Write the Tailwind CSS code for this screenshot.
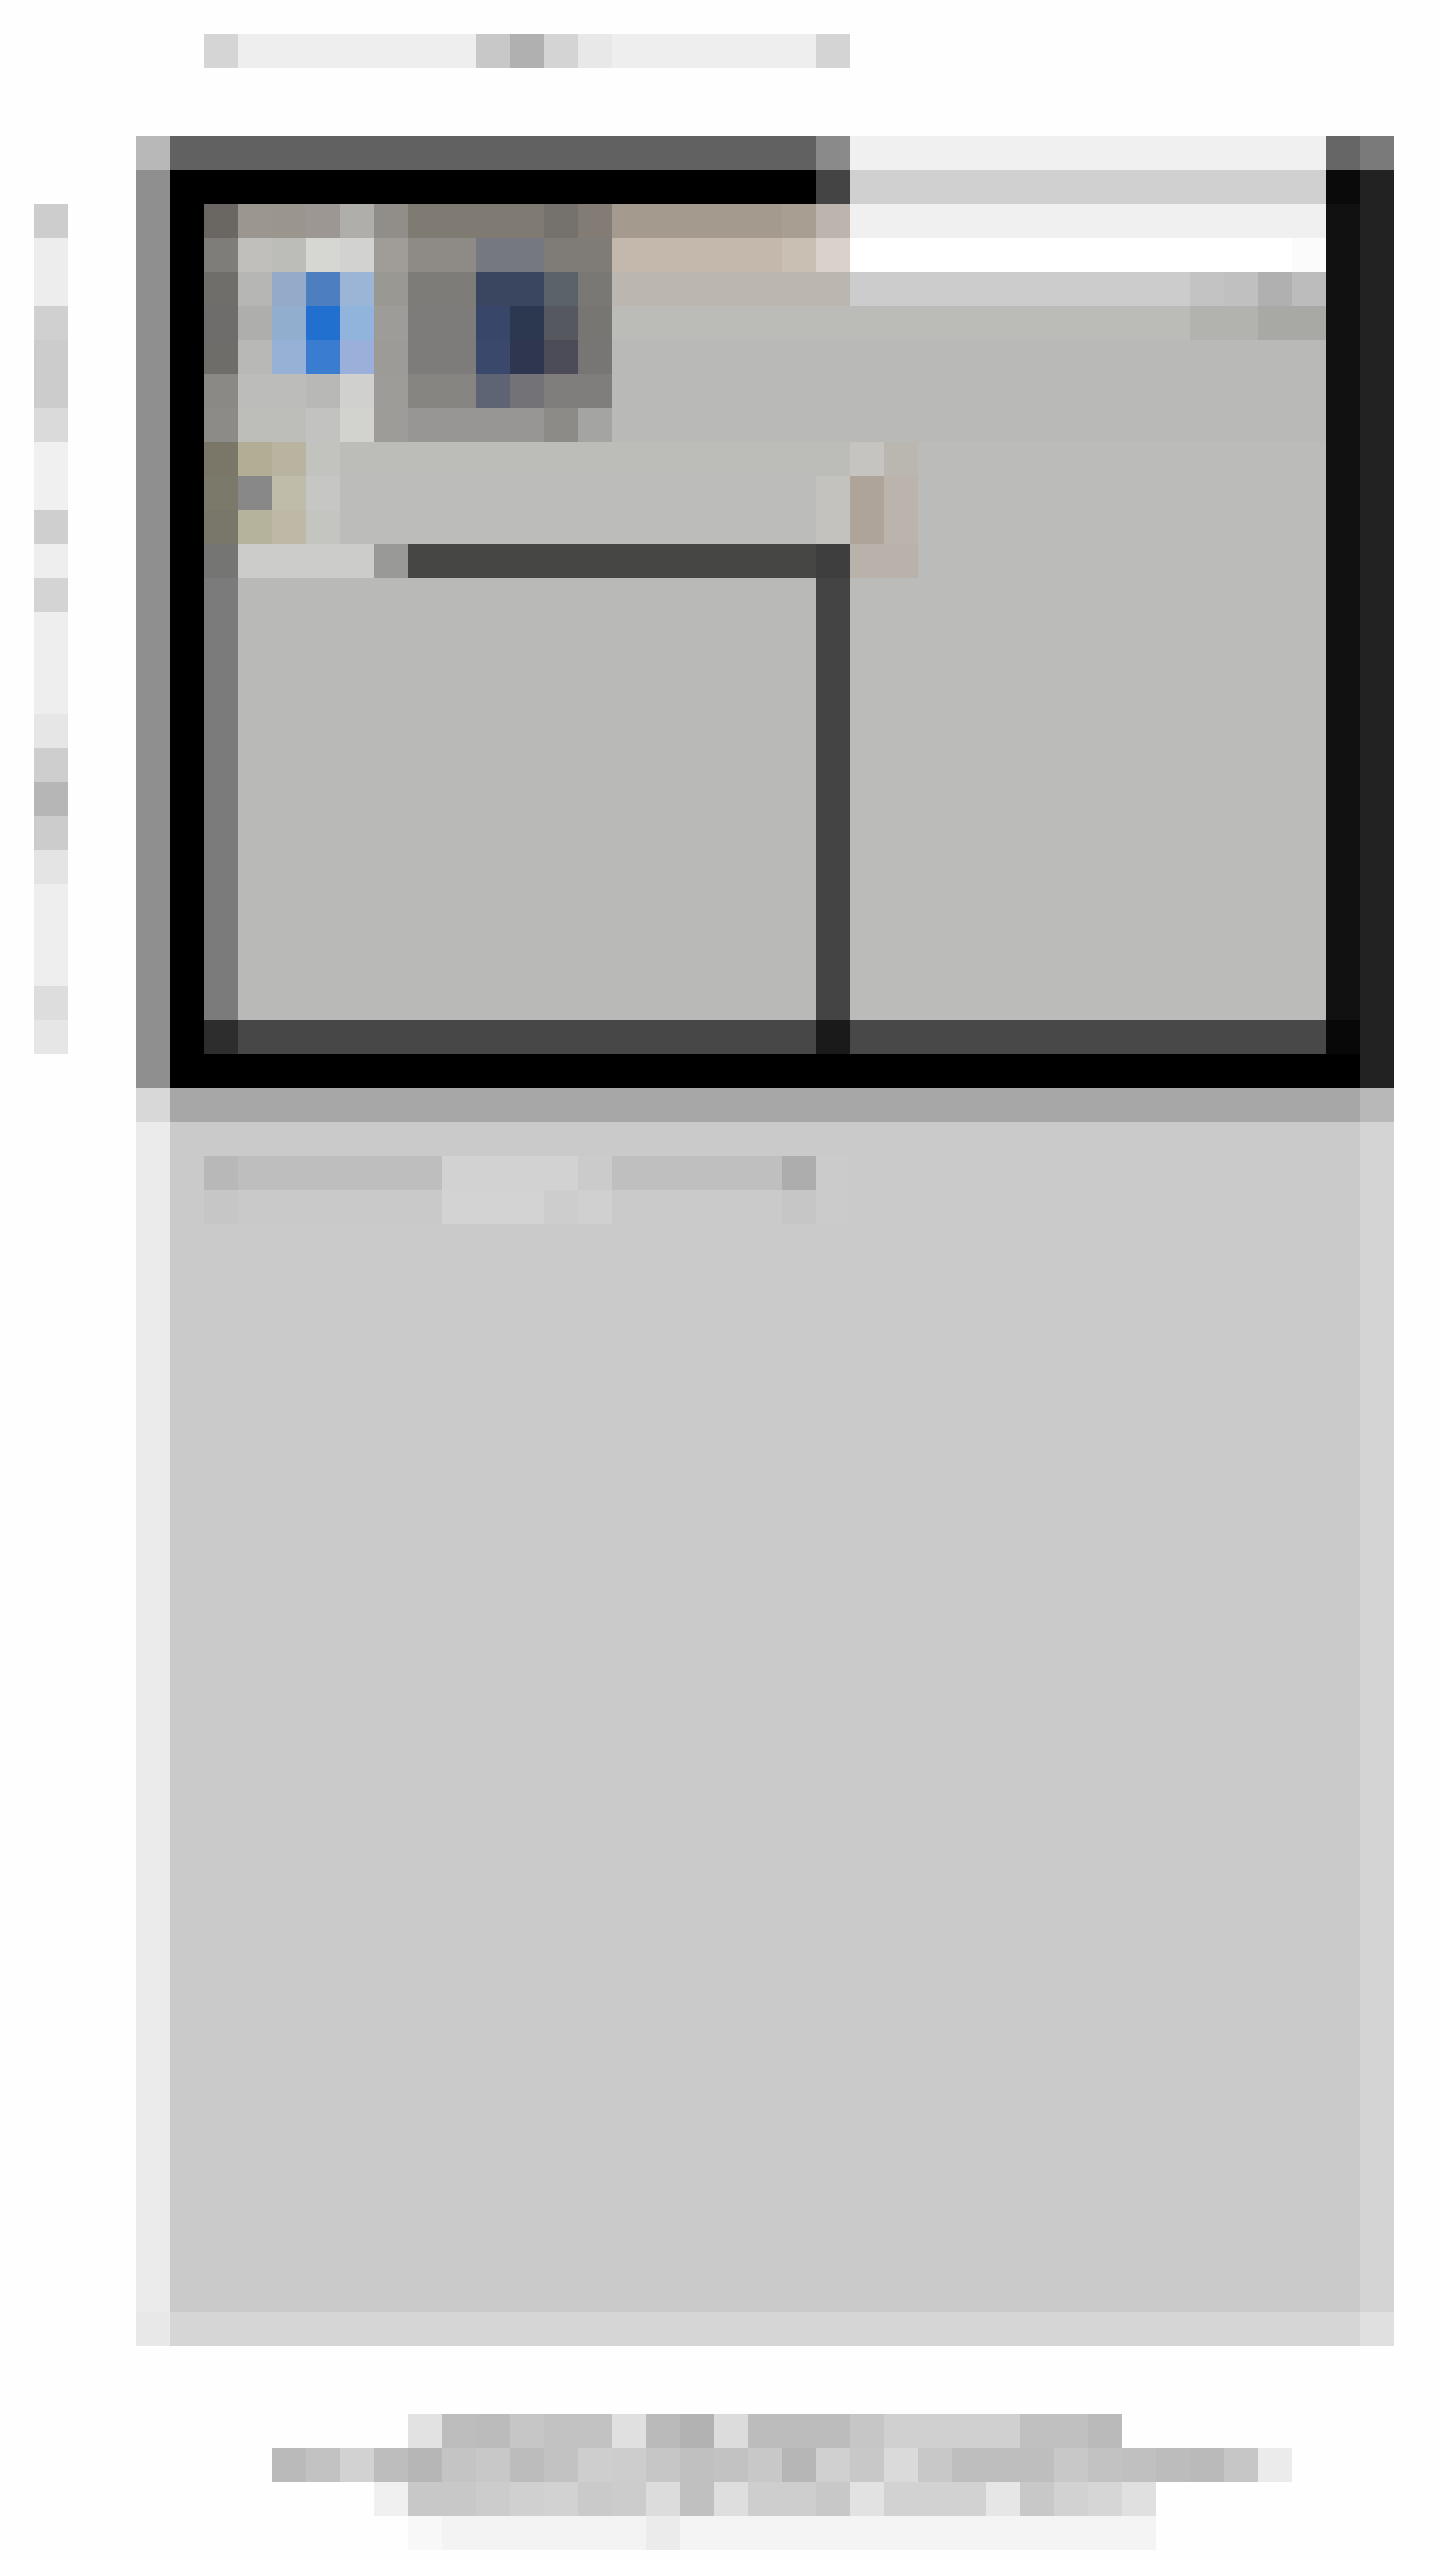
<!DOCTYPE html>
<html lang="en">

<head>
  <meta charset="UTF-8">
  <meta name="viewport" content="width=device-width, initial-scale=1.0">
  <title>Page</title>
  <script src="https://cdn.jsdelivr.net/npm/@tailwindcss/browser@4"></script>
</head>

<body class="bg-[#fefefe] min-h-screen">
  <div class="w-[1440px] pt-[34px]">

    <!-- Title line -->
    <header class="grid grid-cols-[repeat(19,34px)] h-[34px] ml-[204px]">
      <div class="bg-[#d5d5d5]"></div>
      <div class="col-span-7 bg-[#eeeeee]"></div>
      <div class="bg-[#c8c8c8]"></div>
      <div class="bg-[#b0b0b0]"></div>
      <div class="bg-[#d4d4d4]"></div>
      <div class="bg-[#e8e8e8]"></div>
      <div class="col-span-6 bg-[#eeeeee]"></div>
      <div class="bg-[#d4d4d4]"></div>
    </header>

    <div class="flex mt-[68px]">

      <!-- Left column line -->
      <aside class="flex flex-col w-[34px] ml-[34px] mt-[68px]">
        <div class="h-[34px] bg-[#cdcdcd]"></div>
        <div class="h-[68px] bg-[#ededed]"></div>
        <div class="h-[34px] bg-[#d0d0d0]"></div>
        <div class="h-[68px] bg-[#cccccc]"></div>
        <div class="h-[34px] bg-[#dadada]"></div>
        <div class="h-[68px] bg-[#f0f0f0]"></div>
        <div class="h-[34px] bg-[#cfcfcf]"></div>
        <div class="h-[34px] bg-[#eeeeee]"></div>
        <div class="h-[34px] bg-[#d4d4d4]"></div>
        <div class="h-[102px] bg-[#eeeeee]"></div>
        <div class="h-[34px] bg-[#e6e6e6]"></div>
        <div class="h-[34px] bg-[#cecece]"></div>
        <div class="h-[34px] bg-[#b6b6b6]"></div>
        <div class="h-[34px] bg-[#cccccc]"></div>
        <div class="h-[34px] bg-[#e4e4e4]"></div>
        <div class="h-[102px] bg-[#eeeeee]"></div>
        <div class="h-[34px] bg-[#dddddd]"></div>
        <div class="h-[34px] bg-[#e6e6e6]"></div>
      </aside>

      <main class="w-[1258px] ml-[68px]">

        <!-- Dark window -->
        <section>
          <div class="grid grid-cols-[repeat(37,34px)] h-[34px]">
            <div class="bg-[#b8b8b8]"></div>
            <div class="col-span-19 bg-[#616161]"></div>
            <div class="bg-[#8a8a8a]"></div>
            <div class="col-span-14 bg-[#f0f0f0]"></div>
            <div class="bg-[#666666]"></div>
            <div class="bg-[#7a7a7a]"></div>
          </div>
          <div class="grid grid-cols-[repeat(37,34px)] h-[34px]">
            <div class="bg-[#8f8f8f]"></div>
            <div class="col-span-19 bg-black"></div>
            <div class="bg-[#444444]"></div>
            <div class="col-span-14 bg-[#d0d0d0]"></div>
            <div class="bg-[#0a0a0a]"></div>
            <div class="bg-[#222222]"></div>
          </div>

          <!-- Toolbar with the two app icons -->
          <div class="grid grid-cols-[repeat(37,34px)] h-[34px]">
            <div class="bg-[#8f8f8f]"></div>
            <div class="bg-black"></div>
            <div class="bg-[#6a6762]"></div>
            <div class="bg-[#9b9690]"></div>
            <div class="bg-[#9a958d]"></div>
            <div class="bg-[#9c9792]"></div>
            <div class="bg-[#b0aeaa]"></div>
            <div class="bg-[#918d88]"></div>
            <div class="col-span-4 bg-[#7f7b73]"></div>
            <div class="bg-[#75716c]"></div>
            <div class="bg-[#827c74]"></div>
            <div class="col-span-5 bg-[#a59a8e]"></div>
            <div class="bg-[#a99e92]"></div>
            <div class="bg-[#bdb5ad]"></div>
            <div class="col-span-14 bg-[#f0f0f0]"></div>
            <div class="bg-[#111111]"></div>
            <div class="bg-[#222222]"></div>
          </div>
          <div class="grid grid-cols-[repeat(37,34px)] h-[34px]">
            <div class="bg-[#8f8f8f]"></div>
            <div class="bg-black"></div>
            <div class="bg-[#7f7d79]"></div>
            <div class="bg-[#c0bfbc]"></div>
            <div class="bg-[#bcbcb8]"></div>
            <div class="bg-[#d6d6d2]"></div>
            <div class="bg-[#d2d3d0]"></div>
            <div class="bg-[#a09d99]"></div>
            <div class="col-span-2 bg-[#8e8b87]"></div>
            <div class="col-span-2 bg-[#757880]"></div>
            <div class="col-span-2 bg-[#7f7c78]"></div>
            <div class="col-span-5 bg-[#c4b8ac]"></div>
            <div class="bg-[#cabfb3]"></div>
            <div class="bg-[#dad2ca]"></div>
            <div class="col-span-13 bg-white"></div>
            <div class="bg-[#fbfbfb]"></div>
            <div class="bg-[#111111]"></div>
            <div class="bg-[#222222]"></div>
          </div>
          <div class="grid grid-cols-[repeat(37,34px)] h-[34px]">
            <div class="bg-[#8f8f8f]"></div>
            <div class="bg-black"></div>
            <div class="bg-[#706e6b]"></div>
            <div class="bg-[#b6b6b4]"></div>
            <div class="bg-[#93aac8]"></div>
            <div class="bg-[#4d7ec0]"></div>
            <div class="bg-[#9ab5d6]"></div>
            <div class="bg-[#9a9893]"></div>
            <div class="col-span-2 bg-[#7d7c78]"></div>
            <div class="col-span-2 bg-[#3a4560]"></div>
            <div class="bg-[#5c626a]"></div>
            <div class="bg-[#797874]"></div>
            <div class="col-span-7 bg-[#bbb7b0]"></div>
            <div class="col-span-10 bg-[#cccccc]"></div>
            <div class="bg-[#c3c3c3]"></div>
            <div class="bg-[#c0c0c0]"></div>
            <div class="bg-[#b0b0b0]"></div>
            <div class="bg-[#bcbcbc]"></div>
            <div class="bg-[#111111]"></div>
            <div class="bg-[#222222]"></div>
          </div>
          <div class="grid grid-cols-[repeat(37,34px)] h-[34px]">
            <div class="bg-[#8f8f8f]"></div>
            <div class="bg-black"></div>
            <div class="bg-[#6f6d6b]"></div>
            <div class="bg-[#aeaeac]"></div>
            <div class="bg-[#92aecf]"></div>
            <div class="bg-[#2170d0]"></div>
            <div class="bg-[#90b4dc]"></div>
            <div class="bg-[#9e9c98]"></div>
            <div class="col-span-2 bg-[#7d7c7a]"></div>
            <div class="bg-[#38466a]"></div>
            <div class="bg-[#2c3850]"></div>
            <div class="bg-[#55585e]"></div>
            <div class="bg-[#777673]"></div>
            <div class="col-span-17 bg-[#bbbcb8]"></div>
            <div class="col-span-2 bg-[#b2b2ae]"></div>
            <div class="col-span-2 bg-[#a8a8a5]"></div>
            <div class="bg-[#111111]"></div>
            <div class="bg-[#222222]"></div>
          </div>
          <div class="grid grid-cols-[repeat(37,34px)] h-[34px]">
            <div class="bg-[#8f8f8f]"></div>
            <div class="bg-black"></div>
            <div class="bg-[#6f6d6a]"></div>
            <div class="bg-[#b8b8b6]"></div>
            <div class="bg-[#97b0d5]"></div>
            <div class="bg-[#3a7cd0]"></div>
            <div class="bg-[#9ab0da]"></div>
            <div class="bg-[#9d9b98]"></div>
            <div class="col-span-2 bg-[#7d7c7a]"></div>
            <div class="bg-[#3a486c]"></div>
            <div class="bg-[#2e3650]"></div>
            <div class="bg-[#4c4c58]"></div>
            <div class="bg-[#777674]"></div>
            <div class="col-span-21 bg-[#b9bab7]"></div>
            <div class="bg-[#111111]"></div>
            <div class="bg-[#222222]"></div>
          </div>
          <div class="grid grid-cols-[repeat(37,34px)] h-[34px]">
            <div class="bg-[#8f8f8f]"></div>
            <div class="bg-black"></div>
            <div class="bg-[#8a8986]"></div>
            <div class="col-span-2 bg-[#bcbcba]"></div>
            <div class="bg-[#b8b8b6]"></div>
            <div class="bg-[#d0d0ce]"></div>
            <div class="bg-[#9e9c98]"></div>
            <div class="col-span-2 bg-[#878582]"></div>
            <div class="bg-[#5e6474]"></div>
            <div class="bg-[#737276]"></div>
            <div class="col-span-2 bg-[#7f7e7c]"></div>
            <div class="col-span-21 bg-[#b9bab7]"></div>
            <div class="bg-[#111111]"></div>
            <div class="bg-[#222222]"></div>
          </div>
          <div class="grid grid-cols-[repeat(37,34px)] h-[34px]">
            <div class="bg-[#8f8f8f]"></div>
            <div class="bg-black"></div>
            <div class="bg-[#8c8b88]"></div>
            <div class="col-span-2 bg-[#bdbdba]"></div>
            <div class="bg-[#c2c2c0]"></div>
            <div class="bg-[#d2d2ce]"></div>
            <div class="bg-[#9e9c98]"></div>
            <div class="col-span-4 bg-[#979694]"></div>
            <div class="bg-[#8c8b88]"></div>
            <div class="bg-[#a4a4a2]"></div>
            <div class="col-span-21 bg-[#b9bab7]"></div>
            <div class="bg-[#111111]"></div>
            <div class="bg-[#222222]"></div>
          </div>

          <!-- Small marker row -->
          <div class="grid grid-cols-[repeat(37,34px)] h-[34px]">
            <div class="bg-[#8f8f8f]"></div>
            <div class="bg-black"></div>
            <div class="bg-[#7b7768]"></div>
            <div class="bg-[#b3ad96]"></div>
            <div class="bg-[#b8b4a0]"></div>
            <div class="bg-[#c2c2be]"></div>
            <div class="col-span-15 bg-[#bcbcb8]"></div>
            <div class="bg-[#c6c4c0]"></div>
            <div class="bg-[#bab6b0]"></div>
            <div class="col-span-12 bg-[#bbbbb9]"></div>
            <div class="bg-[#111111]"></div>
            <div class="bg-[#222222]"></div>
          </div>
          <div class="grid grid-cols-[repeat(37,34px)] h-[34px]">
            <div class="bg-[#8f8f8f]"></div>
            <div class="bg-black"></div>
            <div class="bg-[#7b7a6a]"></div>
            <div class="bg-[#888888]"></div>
            <div class="bg-[#bfbcaa]"></div>
            <div class="bg-[#c6c6c4]"></div>
            <div class="col-span-14 bg-[#bcbcba]"></div>
            <div class="bg-[#c4c2be]"></div>
            <div class="bg-[#aea49a]"></div>
            <div class="bg-[#bab4ac]"></div>
            <div class="col-span-12 bg-[#bbbbb9]"></div>
            <div class="bg-[#111111]"></div>
            <div class="bg-[#222222]"></div>
          </div>
          <div class="grid grid-cols-[repeat(37,34px)] h-[34px]">
            <div class="bg-[#8f8f8f]"></div>
            <div class="bg-black"></div>
            <div class="bg-[#78776a]"></div>
            <div class="bg-[#b6b39c]"></div>
            <div class="bg-[#bdb9a6]"></div>
            <div class="bg-[#c4c4c0]"></div>
            <div class="col-span-14 bg-[#bcbcba]"></div>
            <div class="bg-[#c4c2be]"></div>
            <div class="bg-[#aea49a]"></div>
            <div class="bg-[#bab4ac]"></div>
            <div class="col-span-12 bg-[#bbbbb9]"></div>
            <div class="bg-[#111111]"></div>
            <div class="bg-[#222222]"></div>
          </div>
          <div class="grid grid-cols-[repeat(37,34px)] h-[34px]">
            <div class="bg-[#8f8f8f]"></div>
            <div class="bg-black"></div>
            <div class="bg-[#757573]"></div>
            <div class="col-span-4 bg-[#cccccb]"></div>
            <div class="bg-[#999998]"></div>
            <div class="col-span-12 bg-[#464645]"></div>
            <div class="bg-[#3e3e3e]"></div>
            <div class="col-span-2 bg-[#b8b2aa]"></div>
            <div class="col-span-12 bg-[#bbbbb9]"></div>
            <div class="bg-[#111111]"></div>
            <div class="bg-[#222222]"></div>
          </div>

          <!-- Two content panes -->
          <div class="grid grid-cols-[repeat(37,34px)] h-[442px]">
            <div class="bg-[#8f8f8f]"></div>
            <div class="bg-black"></div>
            <div class="bg-[#7b7b7b]"></div>
            <div class="col-span-17 bg-[#b9b9b7]"></div>
            <div class="bg-[#444444]"></div>
            <div class="col-span-14 bg-[#bbbbb9]"></div>
            <div class="bg-[#111111]"></div>
            <div class="bg-[#222222]"></div>
          </div>
          <div class="grid grid-cols-[repeat(37,34px)] h-[34px]">
            <div class="bg-[#8f8f8f]"></div>
            <div class="bg-black"></div>
            <div class="bg-[#2d2d2d]"></div>
            <div class="col-span-17 bg-[#474747]"></div>
            <div class="bg-[#1a1a1a]"></div>
            <div class="col-span-14 bg-[#484848]"></div>
            <div class="bg-[#080808]"></div>
            <div class="bg-[#222222]"></div>
          </div>
          <div class="grid grid-cols-[repeat(37,34px)] h-[34px]">
            <div class="bg-[#8f8f8f]"></div>
            <div class="col-span-35 bg-black"></div>
            <div class="bg-[#222222]"></div>
          </div>
        </section>

        <!-- Gray panel -->
        <section>
          <div class="grid grid-cols-[repeat(37,34px)] h-[34px]">
            <div class="bg-[#d8d8d8]"></div>
            <div class="col-span-35 bg-[#a7a7a7]"></div>
            <div class="bg-[#b8b8b8]"></div>
          </div>
          <div class="flex h-[1190px]">
            <div class="w-[34px] bg-[#ebebeb]"></div>
            <div class="w-[1190px] bg-[#cacaca] pl-[34px] pt-[34px]">
              <div class="grid grid-cols-[repeat(19,34px)] h-[34px]">
                <div class="bg-[#b8b8b8]"></div>
                <div class="col-span-6 bg-[#bebebe]"></div>
                <div class="col-span-4 bg-[#d2d2d2]"></div>
                <div class="bg-[#cbcbcb]"></div>
                <div class="col-span-5 bg-[#bfbfbf]"></div>
                <div class="bg-[#adadad]"></div>
                <div class="bg-[#cbcbcb]"></div>
              </div>
              <div class="grid grid-cols-[repeat(19,34px)] h-[34px]">
                <div class="bg-[#c6c6c6]"></div>
                <div class="col-span-6 bg-[#c9c9c9]"></div>
                <div class="col-span-3 bg-[#d3d3d3]"></div>
                <div class="bg-[#cdcdcd]"></div>
                <div class="bg-[#d0d0d0]"></div>
                <div class="col-span-5 bg-[#cacaca]"></div>
                <div class="bg-[#c6c6c6]"></div>
                <div class="bg-[#cbcbcb]"></div>
              </div>
            </div>
            <div class="w-[34px] bg-[#d4d4d4]"></div>
          </div>
          <div class="grid grid-cols-[repeat(37,34px)] h-[34px]">
            <div class="bg-[#e8e8e8]"></div>
            <div class="col-span-35 bg-[#d6d6d6]"></div>
            <div class="bg-[#e0e0e0]"></div>
          </div>
        </section>
      </main>
    </div>

    <!-- Footer lines -->
    <footer class="mt-[68px]">
      <div class="grid grid-cols-[repeat(21,34px)] h-[34px] ml-[408px]">
        <div class="bg-[#e2e2e2]"></div>
        <div class="bg-[#bdbdbd]"></div>
        <div class="bg-[#bbbbbb]"></div>
        <div class="bg-[#c6c6c6]"></div>
        <div class="col-span-2 bg-[#c2c2c2]"></div>
        <div class="bg-[#e0e0e0]"></div>
        <div class="bg-[#bababa]"></div>
        <div class="bg-[#b2b2b2]"></div>
        <div class="bg-[#dcdcdc]"></div>
        <div class="col-span-3 bg-[#bcbcbc]"></div>
        <div class="bg-[#c6c6c6]"></div>
        <div class="col-span-4 bg-[#d0d0d0]"></div>
        <div class="col-span-2 bg-[#c0c0c0]"></div>
        <div class="bg-[#bababa]"></div>
      </div>
      <div class="grid grid-cols-[repeat(30,34px)] h-[34px] ml-[272px]">
        <div class="bg-[#bababa]"></div>
        <div class="bg-[#c2c2c2]"></div>
        <div class="bg-[#d2d2d2]"></div>
        <div class="bg-[#bdbdbd]"></div>
        <div class="bg-[#b6b6b6]"></div>
        <div class="bg-[#c4c4c4]"></div>
        <div class="bg-[#c8c8c8]"></div>
        <div class="bg-[#bcbcbc]"></div>
        <div class="bg-[#c2c2c2]"></div>
        <div class="bg-[#cecece]"></div>
        <div class="bg-[#cdcdcd]"></div>
        <div class="bg-[#c6c6c6]"></div>
        <div class="bg-[#c0c0c0]"></div>
        <div class="bg-[#c2c2c2]"></div>
        <div class="bg-[#c8c8c8]"></div>
        <div class="bg-[#b6b6b6]"></div>
        <div class="bg-[#d0d0d0]"></div>
        <div class="bg-[#c8c8c8]"></div>
        <div class="bg-[#dadada]"></div>
        <div class="bg-[#c8c8c8]"></div>
        <div class="col-span-3 bg-[#bebebe]"></div>
        <div class="bg-[#c8c8c8]"></div>
        <div class="bg-[#c2c2c2]"></div>
        <div class="bg-[#c0c0c0]"></div>
        <div class="bg-[#bcbcbc]"></div>
        <div class="bg-[#bababa]"></div>
        <div class="bg-[#c6c6c6]"></div>
        <div class="bg-[#ebebeb]"></div>
      </div>
      <div class="grid grid-cols-[repeat(23,34px)] h-[34px] ml-[374px]">
        <div class="bg-[#f0f0f0]"></div>
        <div class="col-span-2 bg-[#c8c8c8]"></div>
        <div class="bg-[#cccccc]"></div>
        <div class="bg-[#d0d0d0]"></div>
        <div class="bg-[#d2d2d2]"></div>
        <div class="bg-[#cacaca]"></div>
        <div class="bg-[#cccccc]"></div>
        <div class="bg-[#dcdcdc]"></div>
        <div class="bg-[#c0c0c0]"></div>
        <div class="bg-[#dedede]"></div>
        <div class="col-span-2 bg-[#cecece]"></div>
        <div class="bg-[#c8c8c8]"></div>
        <div class="bg-[#e2e2e2]"></div>
        <div class="col-span-3 bg-[#d2d2d2]"></div>
        <div class="bg-[#e6e6e6]"></div>
        <div class="bg-[#c8c8c8]"></div>
        <div class="bg-[#d2d2d2]"></div>
        <div class="bg-[#d6d6d6]"></div>
        <div class="bg-[#e0e0e0]"></div>
      </div>
      <div class="grid grid-cols-[repeat(22,34px)] h-[34px] ml-[408px]">
        <div class="bg-[#f8f8f8]"></div>
        <div class="col-span-6 bg-[#f3f3f3]"></div>
        <div class="bg-[#ebebeb]"></div>
        <div class="col-span-14 bg-[#f4f4f4]"></div>
      </div>
    </footer>
  </div>
</body>

</html>
